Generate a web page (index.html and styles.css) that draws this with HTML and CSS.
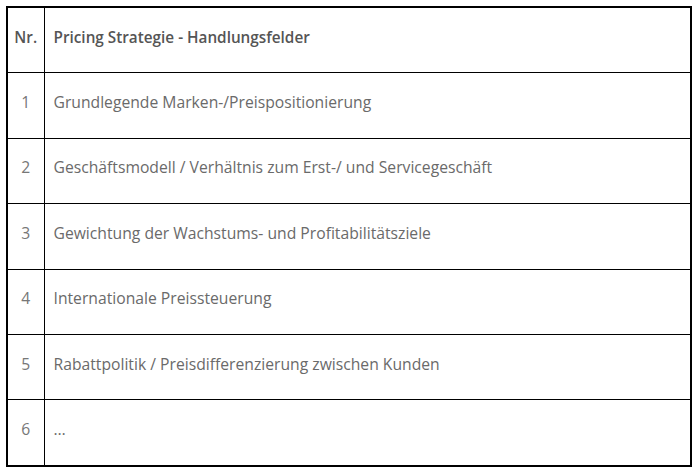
FILE: index.html
```html
<!DOCTYPE html>
<html lang="de">
<head>
<meta charset="utf-8">
<title>Pricing Strategie</title>
<link rel="stylesheet" href="styles.css">
</head>
<body>
<table class="grid">
  <colgroup><col class="c-num"><col class="c-txt"></colgroup>
  <thead>
    <tr><th class="num">Nr.</th><th class="txt">Pricing Strategie - Handlungsfelder</th></tr>
  </thead>
  <tbody>
    <tr><td class="num">1</td><td class="txt">Grundlegende Marken-/Preispositionierung</td></tr>
    <tr><td class="num">2</td><td class="txt">Geschäftsmodell / Verhältnis zum Erst-/ und Servicegeschäft</td></tr>
    <tr><td class="num">3</td><td class="txt">Gewichtung der Wachstums- und Profitabilitätsziele</td></tr>
    <tr><td class="num">4</td><td class="txt">Internationale Preissteuerung</td></tr>
    <tr><td class="num">5</td><td class="txt">Rabattpolitik / Preisdifferenzierung zwischen Kunden</td></tr>
    <tr><td class="num">6</td><td class="txt">…</td></tr>
  </tbody>
</table>
</body>
</html>
```
FILE: styles.css
```css
html, body {
  margin: 0;
  padding: 0;
  background: #fff;
}
body {
  padding: 6px 0 0 6px;
  font-family: "Open Sans", "Liberation Sans", sans-serif;
  color: #6a6a6a;
}
.grid {
  border-collapse: collapse;
  border: 2px solid #000;
  width: 686px;
  table-layout: fixed;
}
.c-num { width: 37px; }
.grid th, .grid td {
  border: 1px solid #000;
  height: 57.4px;
  padding: 0 10px 7px 9px;
  vertical-align: middle;
  text-align: left;
  font-size: 15.7px;
}
.grid th {
  font-weight: 600;
  font-size: 15.3px;
  color: #555;
}
.grid .num {
  padding-left: 0;
  padding-right: 0;
  text-align: center;
}
.grid td.num {
  color: #777;
}
```
